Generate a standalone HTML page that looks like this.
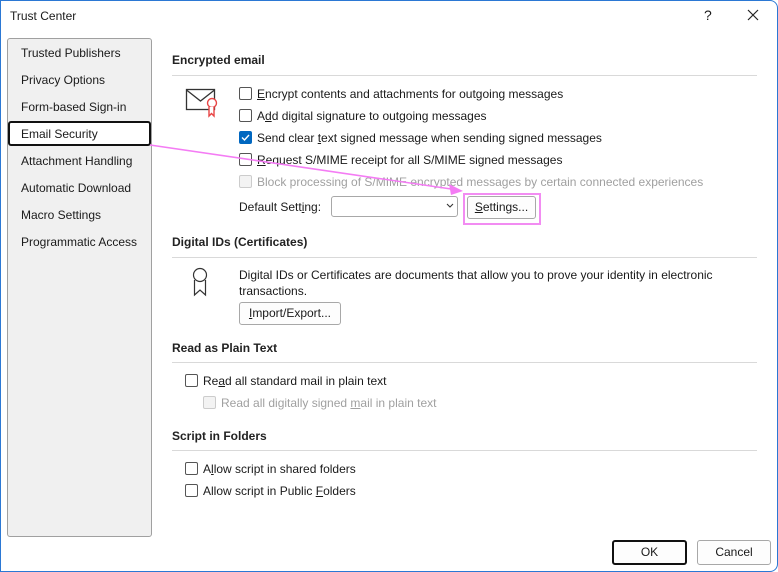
<!DOCTYPE html>
<html><head><meta charset="utf-8"><style>
*{margin:0;padding:0;box-sizing:border-box}
body{width:778px;height:572px;background:#fff;font-family:"Liberation Sans",sans-serif;font-size:12px;color:#1a1a1a;position:relative;overflow:hidden}
.win{position:absolute;left:0;top:0;width:778px;height:572px;border:1px solid #2b78d4;border-radius:0 8px 8px 0}
.t{position:absolute;white-space:nowrap;line-height:14px}
.h{font-weight:bold;color:#222}
.line{position:absolute;height:1px;background:#d9d9d9}
.cb{position:absolute;width:13px;height:13px;border:1px solid #555;border-radius:2px;background:#fff}
.cb.dis{border-color:#ccc;background:#f3f3f3}
.cb.on{background:#0067c0;border-color:#0067c0}
.gray{color:#a0a0a0}
.btn{position:absolute;border:1px solid #a8a8a8;border-radius:3px;background:#fdfdfd;text-align:center;line-height:20px}
.nav{position:absolute;left:7px;top:38px;width:145px;height:499px;background:#f0f0f0;border:1px solid #a0a0a0;border-radius:3px}
u{text-decoration:underline}
</style></head><body>
<div class="win"></div>
<div class="t" style="left:10px;top:9px">Trust Center</div>
<div class="t" style="left:704px;top:8px;font-size:14px">?</div>
<svg style="position:absolute;left:747px;top:9px" width="12" height="12"><path d="M1 1L11 11M11 1L1 11" stroke="#222" stroke-width="1.2"/></svg>

<div class="nav"></div>
<div style="position:absolute;left:8px;top:121px;width:143px;height:25px;border:2px solid #111;border-radius:3px;background:#fff"></div>
<div class="t" style="left:21px;top:46px">Trusted Publishers</div>
<div class="t" style="left:21px;top:73px">Privacy Options</div>
<div class="t" style="left:21px;top:100px">Form-based Sign-in</div>
<div class="t" style="left:21px;top:127px">Email Security</div>
<div class="t" style="left:21px;top:154px">Attachment Handling</div>
<div class="t" style="left:21px;top:181px">Automatic Download</div>
<div class="t" style="left:21px;top:208px">Macro Settings</div>
<div class="t" style="left:21px;top:235px">Programmatic Access</div>

<div class="t h" style="left:172px;top:53px">Encrypted email</div>
<div class="line" style="left:172px;top:75px;width:585px"></div>
<svg style="position:absolute;left:185px;top:88px" width="34" height="30"><rect x="1.5" y="1.5" width="28" height="20" fill="#fff" stroke="#333" stroke-width="1.3"/><path d="M1.5 2L15.5 13L29.5 2" fill="none" stroke="#333" stroke-width="1.3"/><circle cx="27" cy="15" r="4.5" fill="#fff" stroke="#e84545" stroke-width="1.4"/><path d="M24 19V28L26.5 25.5L29 28V19" fill="#fff" stroke="#e84545" stroke-width="1.4"/></svg>

<div class="cb" style="left:239px;top:87px"></div><div class="t" style="left:257px;top:87px"><u>E</u>ncrypt contents and attachments for outgoing messages</div>
<div class="cb" style="left:239px;top:109px"></div><div class="t" style="left:257px;top:109px">A<u>d</u>d digital signature to outgoing messages</div>
<div class="cb on" style="left:239px;top:131px"><svg width="11" height="11" style="position:absolute;left:0;top:0"><path d="M2 5.5L4.5 8L9 3" fill="none" stroke="#fff" stroke-width="1.4"/></svg></div><div class="t" style="left:257px;top:131px">Send clear <u>t</u>ext signed message when sending signed messages</div>
<div class="cb" style="left:239px;top:153px"></div><div class="t" style="left:257px;top:153px"><u>R</u>equest S/MIME receipt for all S/MIME signed messages</div>
<div class="cb dis" style="left:239px;top:175px"></div><div class="t gray" style="left:257px;top:175px">Block processing of S/MIME encrypted messages by certain connected experiences</div>

<div class="t" style="left:239px;top:200px">Default Sett<u>i</u>ng:</div>
<div style="position:absolute;left:331px;top:196px;width:127px;height:21px;border:1px solid #a8a8a8;border-radius:3px;background:#fff"></div>
<svg style="position:absolute;left:446px;top:203px" width="8" height="6"><path d="M1 1L4 4L7 1" fill="none" stroke="#333" stroke-width="1.1"/></svg>
<div class="btn" style="left:467px;top:196px;width:69px;height:23px"><u>S</u>ettings...</div>
<div style="position:absolute;left:463px;top:193px;width:78px;height:32px;border:2px solid #f28cf2"></div>

<svg style="position:absolute;left:0;top:0" width="778" height="572"><line x1="150" y1="145" x2="458" y2="190" stroke="#f47cf4" stroke-width="1.6"/><path d="M463 191L449 184L451 195Z" fill="#f47cf4"/></svg>

<div class="t h" style="left:172px;top:235px">Digital IDs (Certificates)</div>
<div class="line" style="left:172px;top:257px;width:585px"></div>
<svg style="position:absolute;left:190px;top:266px" width="22" height="32"><circle cx="10" cy="9" r="6.5" fill="#fff" stroke="#333" stroke-width="1.2"/><path d="M4.5 14V29L10 24L15.5 29V14" fill="none" stroke="#333" stroke-width="1.2"/></svg>
<div class="t" style="left:239px;top:268px">Digital IDs or Certificates are documents that allow you to prove your identity in electronic</div>
<div class="t" style="left:239px;top:284px">transactions.</div>
<div class="btn" style="left:239px;top:302px;width:102px;height:23px"><u>I</u>mport/Export...</div>

<div class="t h" style="left:172px;top:341px">Read as Plain Text</div>
<div class="line" style="left:172px;top:362px;width:585px"></div>
<div class="cb" style="left:185px;top:374px"></div><div class="t" style="left:203px;top:374px">Re<u>a</u>d all standard mail in plain text</div>
<div class="cb dis" style="left:203px;top:396px"></div><div class="t gray" style="left:221px;top:396px">Read all digitally signed <u>m</u>ail in plain text</div>

<div class="t h" style="left:172px;top:429px">Script in Folders</div>
<div class="line" style="left:172px;top:450px;width:585px"></div>
<div class="cb" style="left:185px;top:462px"></div><div class="t" style="left:203px;top:462px">A<u>l</u>low script in shared folders</div>
<div class="cb" style="left:185px;top:484px"></div><div class="t" style="left:203px;top:484px">Allow script in Public <u>F</u>olders</div>

<div class="btn" style="left:612px;top:540px;width:75px;height:25px;border:2px solid #111;line-height:21px">OK</div>
<div class="btn" style="left:697px;top:540px;width:74px;height:25px;line-height:23px">Cancel</div>
</body></html>
